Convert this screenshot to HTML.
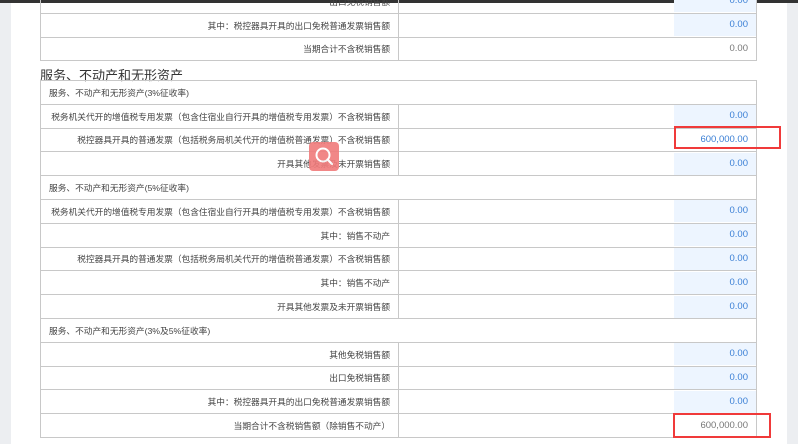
<!DOCTYPE html>
<html><head><meta charset="utf-8"><style>
*{margin:0;padding:0;box-sizing:border-box}
body{width:798px;height:444px;overflow:hidden;background:#fff;font-family:"Liberation Sans","Noto Sans CJK SC",sans-serif;font-size:8.7px;color:#444;position:relative}
.topbar{position:absolute;left:0;top:0;width:798px;height:3px;background:#333}
.lg{position:absolute;left:0;top:3px;width:11px;height:441px;background:#eceef1}
.rg{position:absolute;left:787px;top:3px;width:11px;height:441px;background:#eceef1}
table{position:absolute;left:40px;border-collapse:collapse;width:717px;table-layout:fixed}
td{border:1px solid #c8c8c8;height:23.8px;padding:0 8px 0 4px;white-space:nowrap;overflow:hidden}
td.l{width:358px;text-align:right}
td.v{text-align:right;padding:0;font-size:9.5px}
td.v span{display:block;float:right;width:82px;height:22px;line-height:22px;padding-right:8px;color:#3a7fd5;background:#edf5ff}
td.v span.g{background:none;color:#777}
td.h{text-align:left;padding-left:8px}
.title{position:absolute;left:40px;top:65px;font-size:13px;color:#333}
.red{position:absolute;border:2px solid #f03a3a}
.ic{position:absolute;left:309px;top:142px;width:30px;height:29px;background:#f07b7b;border-radius:4px;opacity:.9}
</style></head><body>
<div class="topbar"></div><div class="lg"></div><div class="rg"></div>
<table style="top:-11px">
<tr><td class="l">出口免税销售额</td><td class="v"><span>0.00</span></td></tr>
<tr><td class="l">其中：税控器具开具的出口免税普通发票销售额</td><td class="v"><span>0.00</span></td></tr>
<tr><td class="l">当期合计不含税销售额</td><td class="v"><span class="g">0.00</span></td></tr>
</table>
<div class="title">服务、不动产和无形资产</div>
<table style="top:80px">
<tr><td class="h" colspan="2">服务、不动产和无形资产(3%征收率)</td></tr>
<tr><td class="l">税务机关代开的增值税专用发票（包含住宿业自行开具的增值税专用发票）不含税销售额</td><td class="v"><span>0.00</span></td></tr>
<tr><td class="l">税控器具开具的普通发票（包括税务局机关代开的增值税普通发票）不含税销售额</td><td class="v"><span style="background:#fff">600,000.00</span></td></tr>
<tr><td class="l">开具其他发票及未开票销售额</td><td class="v"><span>0.00</span></td></tr>
<tr><td class="h" colspan="2">服务、不动产和无形资产(5%征收率)</td></tr>
<tr><td class="l">税务机关代开的增值税专用发票（包含住宿业自行开具的增值税专用发票）不含税销售额</td><td class="v"><span>0.00</span></td></tr>
<tr><td class="l">其中：销售不动产</td><td class="v"><span>0.00</span></td></tr>
<tr><td class="l">税控器具开具的普通发票（包括税务局机关代开的增值税普通发票）不含税销售额</td><td class="v"><span>0.00</span></td></tr>
<tr><td class="l">其中：销售不动产</td><td class="v"><span>0.00</span></td></tr>
<tr><td class="l">开具其他发票及未开票销售额</td><td class="v"><span>0.00</span></td></tr>
<tr><td class="h" colspan="2">服务、不动产和无形资产(3%及5%征收率)</td></tr>
<tr><td class="l">其他免税销售额</td><td class="v"><span>0.00</span></td></tr>
<tr><td class="l">出口免税销售额</td><td class="v"><span>0.00</span></td></tr>
<tr><td class="l">其中：税控器具开具的出口免税普通发票销售额</td><td class="v"><span>0.00</span></td></tr>
<tr><td class="l">当期合计不含税销售额（除销售不动产）</td><td class="v"><span class="g">600,000.00</span></td></tr>
</table>
<div class="red" style="left:674px;top:126px;width:107px;height:23px"></div>
<div class="red" style="left:673px;top:413px;width:98px;height:25px"></div>
<div class="ic"><svg width="30" height="29" viewBox="0 0 30 29"><circle cx="14" cy="13" r="6.5" fill="none" stroke="#fff" stroke-width="2"/><path d="M18.5 17.5L23 22" stroke="#fff" stroke-width="2.2" stroke-linecap="round"/></svg></div>
</body></html>
